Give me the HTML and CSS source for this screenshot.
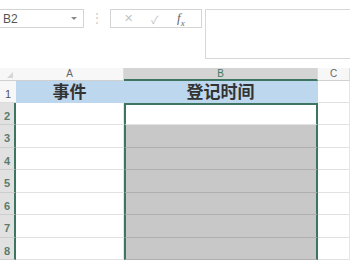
FILE: index.html
```html
<!DOCTYPE html>
<html lang="zh-CN">
<head>
  <meta charset="UTF-8">
  <title>登记时间</title>
  <link rel="stylesheet" href="styles.css">
</head>
<body>
  <div class="formula-bar">
    <div class="name-box">
      <span>B2</span>
      <span class="caret"></span>
    </div>
    <div class="grip">⋮</div>
    <div class="fn-box">
      <span class="fn-btn">✕</span>
      <span class="fn-btn">✓</span>
      <span class="fx"><i>f</i><sub>x</sub></span>
    </div>
    <div class="formula-input"></div>
  </div>

  <div class="sheet">
    <div class="corner"><span class="tri"></span></div>
    <div class="col-head">A</div>
    <div class="col-head active">B</div>
    <div class="col-head">C</div>

    <div class="row-head">1</div>
    <div class="cell title">事件</div>
    <div class="cell title">登记时间</div>
    <div class="cell"></div>

    <div class="row-head sel">2</div>
    <div class="cell"></div>
    <div class="cell in-sel first"></div>
    <div class="cell"></div>

    <div class="row-head sel">3</div>
    <div class="cell"></div>
    <div class="cell in-sel picked"></div>
    <div class="cell"></div>

    <div class="row-head sel">4</div>
    <div class="cell"></div>
    <div class="cell in-sel picked"></div>
    <div class="cell"></div>

    <div class="row-head sel">5</div>
    <div class="cell"></div>
    <div class="cell in-sel picked"></div>
    <div class="cell"></div>

    <div class="row-head sel">6</div>
    <div class="cell"></div>
    <div class="cell in-sel picked"></div>
    <div class="cell"></div>

    <div class="row-head sel">7</div>
    <div class="cell"></div>
    <div class="cell in-sel picked"></div>
    <div class="cell"></div>

    <div class="row-head sel">8</div>
    <div class="cell"></div>
    <div class="cell in-sel picked"></div>
    <div class="cell"></div>
  </div>
</body>
</html>
```

FILE: styles.css
```css
body {
  margin: 0;
  background: #fff;
  font-family: "Liberation Sans", Arial, sans-serif;
  overflow: hidden;
}
.formula-bar {
  display: flex;
  align-items: flex-start;
  padding-top: 9px;
  height: 49px;
}
.name-box {
  width: 84px;
  height: 19px;
  box-sizing: border-box;
  border: 1px solid #d4d4d4;
  border-left: none;
  display: flex;
  align-items: center;
  justify-content: space-between;
  padding: 0 6px 0 3px;
  font-size: 12px;
  color: #555;
}
.caret {
  width: 0;
  height: 0;
  border-left: 3px solid transparent;
  border-right: 3px solid transparent;
  border-top: 3px solid #888;
}
.grip {
  width: 26px;
  text-align: center;
  color: #ccc;
  font-size: 12px;
  line-height: 19px;
}
.fn-box {
  width: 92px;
  height: 19px;
  box-sizing: border-box;
  border: 1px solid #d4d4d4;
  display: flex;
  align-items: center;
  padding-left: 13px;
  gap: 18px;
  font-size: 11px;
  color: #c4c4c4;
}
.fx {
  font-family: "Liberation Serif", serif;
  color: #666;
  font-size: 13px;
}
.fx sub {
  font-size: 9px;
  font-style: italic;
}
.formula-input {
  margin-left: 3px;
  flex: 1;
  height: 50px;
  box-sizing: border-box;
  border: 1px solid #d8d8d8;
  border-right: none;
}
.sheet {
  margin-top: 10px;
  display: grid;
  grid-template-columns: 16px 108px 194px 1fr;
  grid-template-rows: 13px 22px 22px 23px 22px 23px 22px 23px 22px;
}
.corner,
.col-head {
  background: #f7f7f7;
  border-bottom: 1px solid #d0d0d0;
  box-sizing: border-box;
}
.corner {
  display: flex;
  align-items: flex-end;
  justify-content: flex-end;
  padding: 0 3px 2px 0;
}
.tri {
  width: 0;
  height: 0;
  border-left: 6px solid transparent;
  border-bottom: 6px solid #d6d6d6;
}
.col-head {
  font-size: 10px;
  color: #666;
  text-align: center;
  line-height: 12px;
  border-right: 1px solid #dcdcdc;
}
.col-head.active {
  background: #d4d4d4;
  color: #3f7a62;
  border-bottom: 2px solid #3d7560;
}
.row-head {
  background: #f7f7f7;
  border-bottom: 1px solid #dcdcdc;
  box-sizing: border-box;
  font-size: 11px;
  color: #555;
  display: flex;
  align-items: center;
  justify-content: center;
  padding-top: 4px;
}
.row-head.sel {
  background: #e1e1e1;
  color: #5b7c6c;
  font-weight: bold;
  border-right: 2px solid #3d7560;
  border-bottom-color: #cdcdcd;
}
.cell {
  border-bottom: 1px solid #e2e2e2;
  border-right: 1px solid #e6e6e6;
  box-sizing: border-box;
}
.cell.title {
  background: #bdd7ee;
  font-family: "Noto Sans CJK SC", sans-serif;
  font-weight: bold;
  font-size: 17px;
  color: #333;
  text-align: center;
  line-height: 20px;
  border-bottom: none;
  border-right-color: #bdd7ee;
}
.cell.in-sel {
  border-left: 2px solid #3d7560;
  border-right: 2px solid #3d7560;
}
.cell.first {
  border-top: 2px solid #3d7560;
}
.cell.picked {
  background: #c8c8c9;
  border-bottom-color: #afafaf;
}
```
